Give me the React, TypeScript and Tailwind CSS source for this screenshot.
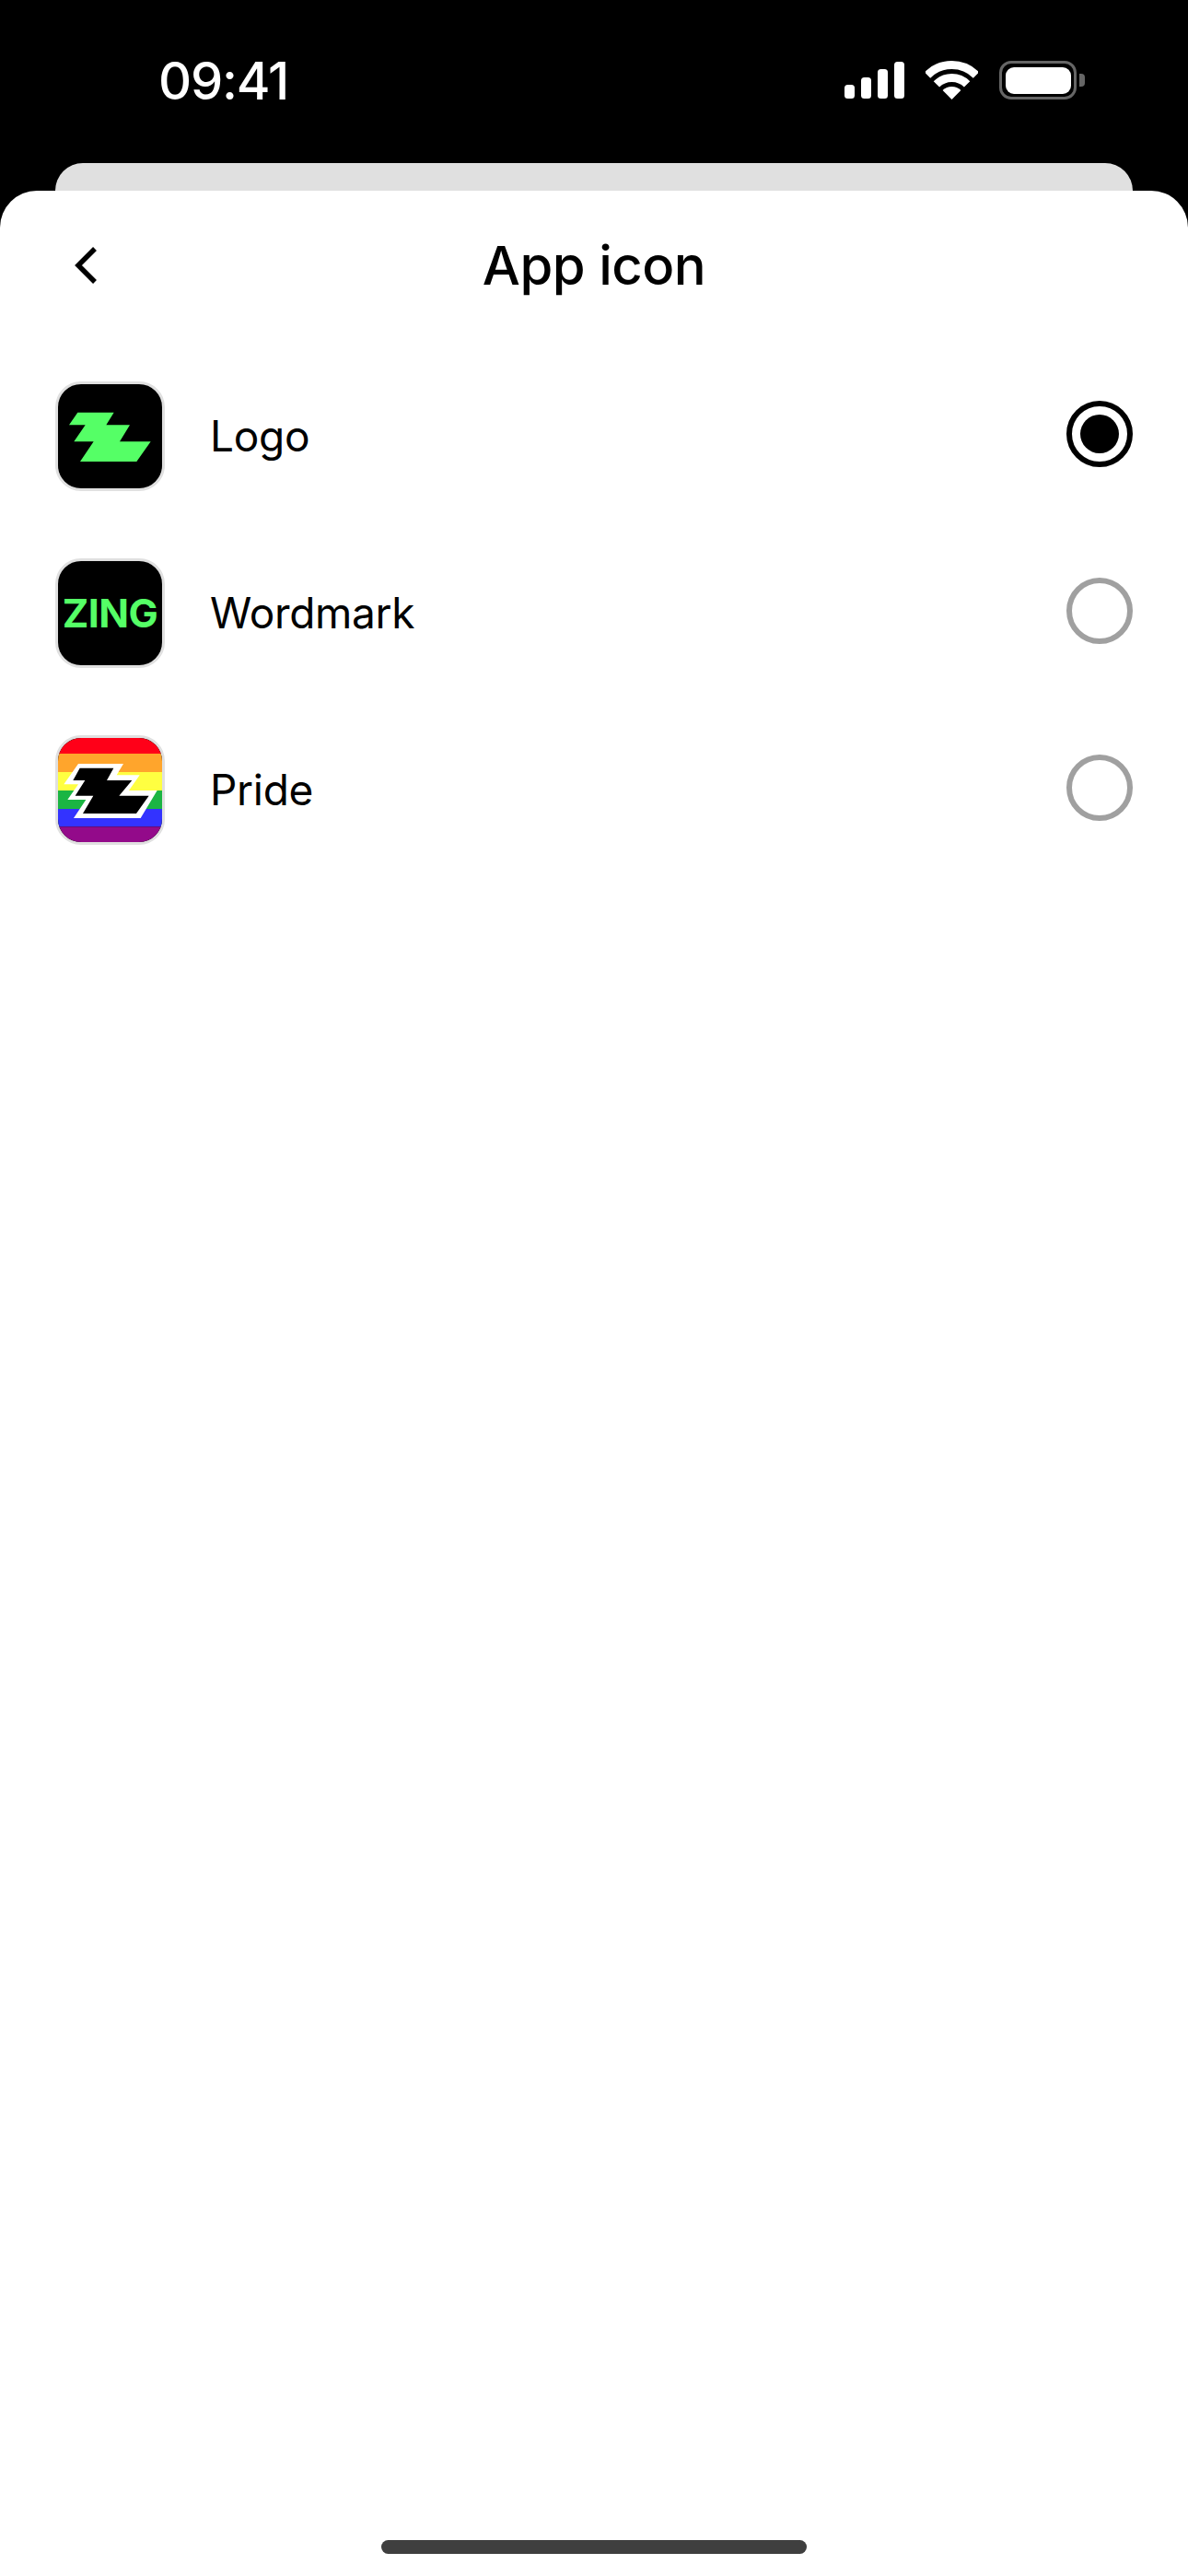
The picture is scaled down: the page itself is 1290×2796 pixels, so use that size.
const ZAG = '135,143 253,143 228,184 305,184 272,238 373,238 327,303 143,303 187,238 123,238 160,184 107,184'
const PRIDE_OUTLINE = '75,93 222,93 200,130 275,130 240,180 332,180 278,270 60,270 100,210 40,210 75,160 28,160'
const PRIDE_FILL = '80,107 190,107 168,147 250,147 208,197 305,197 264,255 90,255 124,197 65,197 97,147 58,147'

const STRIPES = [
  { y: 0, h: 60, color: '#ff0018' },
  { y: 60, h: 60, color: '#ffa52c' },
  { y: 120, h: 60, color: '#ffff41' },
  { y: 180, h: 60, color: '#1bb543' },
  { y: 240, h: 58, color: '#3333ff' },
  { y: 298, h: 62, color: '#930a8a' },
]

function IconFrame({ children }: { children: React.ReactNode }) {
  return (
    <div className="flex h-[119px] w-[119px] shrink-0 items-center justify-center overflow-hidden rounded-[28px] border-[3px] border-[#e0e0e0] bg-black">
      {children}
    </div>
  )
}

function LogoIcon() {
  return (
    <IconFrame>
      <svg viewBox="71 51 339 339" className="h-full w-full">
        <polygon points={ZAG} fill="#55ff66" />
      </svg>
    </IconFrame>
  )
}

function WordmarkIcon() {
  return (
    <IconFrame>
      <span className="font-['Inter'] text-[43px] leading-none font-bold tracking-[-0.6px] text-[#55ff66]">ZING</span>
    </IconFrame>
  )
}

function PrideIcon() {
  return (
    <IconFrame>
      <svg viewBox="9 9 339 339" className="h-full w-full">
        {STRIPES.map(s => (
          <rect key={s.color} x="0" y={s.y} width="360" height={s.h} fill={s.color} />
        ))}
        <polygon points={PRIDE_OUTLINE} fill="#fff" />
        <polygon points={PRIDE_FILL} fill="#000" />
      </svg>
    </IconFrame>
  )
}

function Radio({ selected }: { selected?: boolean }) {
  return (
    <div
      className={`mb-[5px] ml-auto flex h-[72px] w-[72px] items-center justify-center rounded-full border-[6px] ${
        selected ? 'border-black' : 'border-[#a0a0a0]'
      }`}
    >
      {selected && <div className="h-[42px] w-[42px] rounded-full bg-black" />}
    </div>
  )
}

const OPTIONS = [
  { label: 'Logo', icon: <LogoIcon />, selected: true },
  { label: 'Wordmark', icon: <WordmarkIcon />, selected: false },
  { label: 'Pride', icon: <PrideIcon />, selected: false },
]

function StatusIcons() {
  return (
    <div className="flex items-center self-start">
      {/* signal */}
      <svg width="65" height="40" viewBox="0 0 65 40" fill="#fff">
        <rect x="0" y="25" width="11" height="15" rx="3.5" />
        <rect x="18" y="17" width="11" height="23" rx="3.5" />
        <rect x="36" y="8" width="11" height="32" rx="3.5" />
        <rect x="54" y="0" width="11" height="40" rx="3.5" />
      </svg>
      {/* wifi */}
      <svg width="57" height="42" viewBox="0 0 57 42" className="ml-[23px]" fill="none" stroke="#fff" strokeWidth="9">
        <path d="M2 15.5A37.5 37.5 0 0 1 55 15.5" />
        <path d="M11.9 25.4A23.5 23.5 0 0 1 45.1 25.4" />
        <path d="M28.5 42L18.6 32.1A14 14 0 0 1 38.4 32.1Z" fill="#fff" stroke="none" />
      </svg>
      {/* battery */}
      <div className="ml-[23px] flex items-center">
        <div className="flex h-[42px] w-[84px] items-center justify-center rounded-[13px] border-[3px] border-[#666]">
          <div className="h-[29px] w-[71px] rounded-[9px] bg-white" />
        </div>
        <div className="ml-[3px] h-[14px] w-[6px] rounded-r-[4px] bg-[#666]" />
      </div>
    </div>
  )
}

export default function App() {
  return (
    <div className="flex h-[2796px] w-[1290px] flex-col overflow-hidden bg-black font-['Inter',sans-serif]">
      <div className="flex h-[177px] shrink-0 justify-between pt-[66px] pr-[112px] pl-[172px]">
        <span className="text-[56px] leading-[44px] font-medium tracking-[-1.2px] text-white">09:41</span>
        <StatusIcons />
      </div>

      <div className="mx-[60px] h-[30px] shrink-0 rounded-t-[32px] bg-[#e0e0e0]" />

      <div className="flex flex-1 flex-col rounded-t-[40px] bg-white">
        <div className="grid h-[162px] shrink-0 grid-cols-[1fr_auto_1fr] items-center px-[80px]">
          <svg width="26" height="42" viewBox="0 0 26 42" fill="none" stroke="#000" strokeWidth="5.5">
            <path d="M23 3L5 21L23 39" />
          </svg>
          <h1 className="text-[58px] leading-none font-medium tracking-[-0.5px] text-black">App icon</h1>
          <div />
        </div>

        <div className="flex flex-col gap-[73px] px-[60px] pt-[45px]">
          {OPTIONS.map(o => (
            <div key={o.label} className="flex items-center">
              {o.icon}
              <span className="mb-[2px] ml-[49px] text-[46px] leading-none tracking-[-0.3px] text-black">{o.label}</span>
              <Radio selected={o.selected} />
            </div>
          ))}
        </div>

        <div className="mt-auto mb-[24px] h-[15px] w-[462px] self-center rounded-full bg-[#3f3f3f]" />
      </div>
    </div>
  )
}
